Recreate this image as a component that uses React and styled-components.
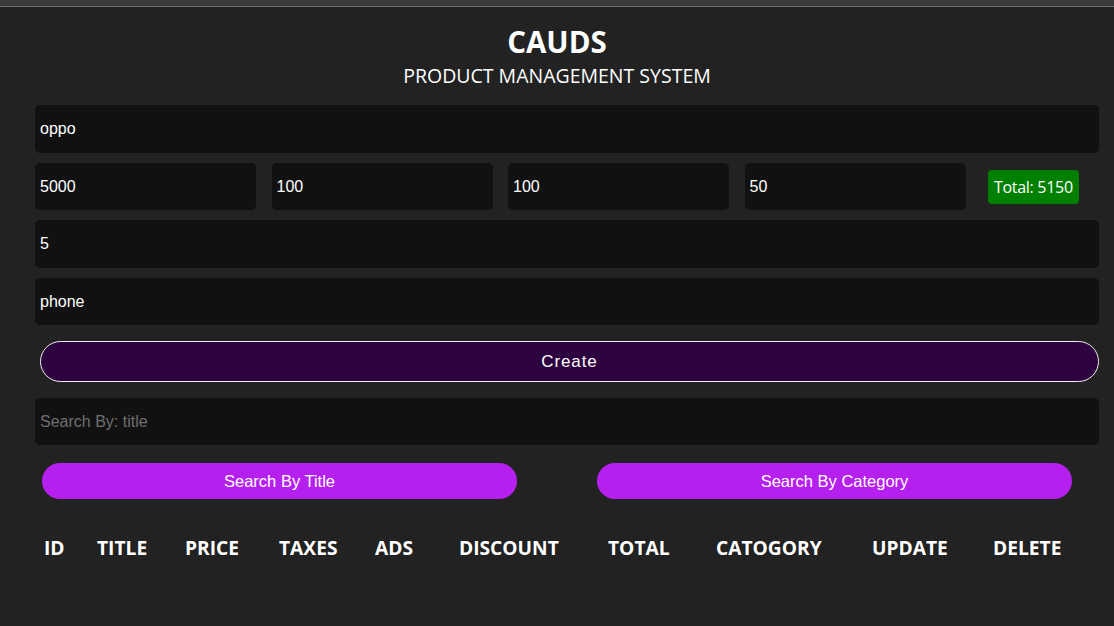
import React from "react";
import styled, { createGlobalStyle } from "styled-components";

const Global = createGlobalStyle`
  html, body { margin: 0; padding: 0; background: #222222; }
  body { font-family: "Open Sans", "Noto Sans", sans-serif; color: #fff; }
  * { box-sizing: border-box; }
`;

const TopBar = styled.div`
  height: 7px;
  background: #3b3b3b;
  border-bottom: 1px solid #6e6e6e;
`;

const Page = styled.div`
  min-height: 619px;
  background: #222222;
`;

const Header = styled.header`
  text-align: center;
  padding-top: 20px;
`;

const Title = styled.h1`
  margin: 0;
  font-size: 29.5px;
  font-weight: 700;
  line-height: 30px;
`;

const Subtitle = styled.h2`
  margin: 7px 0 0;
  font-size: 19.5px;
  font-weight: 400;
  line-height: 24px;
  letter-spacing: 0;
`;

const Main = styled.main`
  padding: 17px 15px 0 35px;
  display: flex;
  flex-direction: column;
`;

const Field = styled.input`
  display: block;
  width: 100%;
  height: ${(p) => p.$h || 48}px;
  background: #111111;
  border: none;
  border-radius: 5px;
  outline: none;
  color: #fff;
  font-family: "Liberation Sans", Arial, sans-serif;
  font-size: 16px;
  padding: 0 5px;
  margin-bottom: 10px;
  &::placeholder { color: #6f6f6f; }
`;

const PriceRow = styled.div`
  display: flex;
  align-items: center;
  gap: 15.5px;
  margin-bottom: 10px;
  & > input { margin-bottom: 0; flex: 0 0 221px; }
`;

const Total = styled.span`
  margin-left: 7px;
  background: #008000;
  color: #fff;
  height: 34px;
  padding: 0 6px;
  border-radius: 4px;
  display: inline-flex;
  align-items: center;
  font-size: 16px;
  letter-spacing: -0.3px;
`;

const CreateButton = styled.button`
  margin: 6px 0 16px 5px;
  width: calc(100% - 5px);
  height: 41px;
  border-radius: 21px;
  border: 1px solid #f0f0f0;
  background: #2d0340;
  color: #fff;
  font-family: "Liberation Sans", Arial, sans-serif;
  font-size: 17px;
  letter-spacing: 0.9px;
  cursor: pointer;
`;

const SearchButtons = styled.div`
  display: flex;
  gap: 80px;
  padding-left: 7px;
  margin-top: 8px;
`;

const PillButton = styled.button`
  width: 475px;
  height: 36px;
  border: none;
  border-radius: 18px;
  background: #b620ef;
  color: #fff;
  font-family: "Liberation Sans", Arial, sans-serif;
  font-size: 16.5px;
  cursor: pointer;
`;

const Table = styled.div`
  display: grid;
  grid-template-columns: 53px 88px 94px 96px 84px 149px 108px 156px 121px 1fr;
  padding-left: 9px;
  margin-top: 37px;
`;

const Th = styled.div`
  font-size: 19.2px;
  font-weight: 700;
  line-height: 24px;
  letter-spacing: 0;
  white-space: nowrap;
`;

const heads = ["ID", "TITLE", "PRICE", "TAXES", "ADS", "DISCOUNT", "TOTAL", "CATOGORY", "UPDATE", "DELETE"];

export default function App() {
  return (
    <Page>
      <Global />
      <TopBar />
      <Header>
        <Title>CAUDS</Title>
        <Subtitle>PRODUCT MANAGEMENT SYSTEM</Subtitle>
      </Header>
      <Main>
        <Field defaultValue="oppo" />
        <PriceRow>
          <Field $h={47} defaultValue="5000" />
          <Field $h={47} defaultValue="100" />
          <Field $h={47} defaultValue="100" />
          <Field $h={47} defaultValue="50" />
          <Total>Total: 5150</Total>
        </PriceRow>
        <Field defaultValue="5" />
        <Field $h={47} defaultValue="phone" />
        <CreateButton>Create</CreateButton>
        <Field $h={47} placeholder="Search By: title" />
        <SearchButtons>
          <PillButton>Search By Title</PillButton>
          <PillButton>Search By Category</PillButton>
        </SearchButtons>
        <Table>
          {heads.map((h) => (
            <Th key={h}>{h}</Th>
          ))}
        </Table>
      </Main>
    </Page>
  );
}
